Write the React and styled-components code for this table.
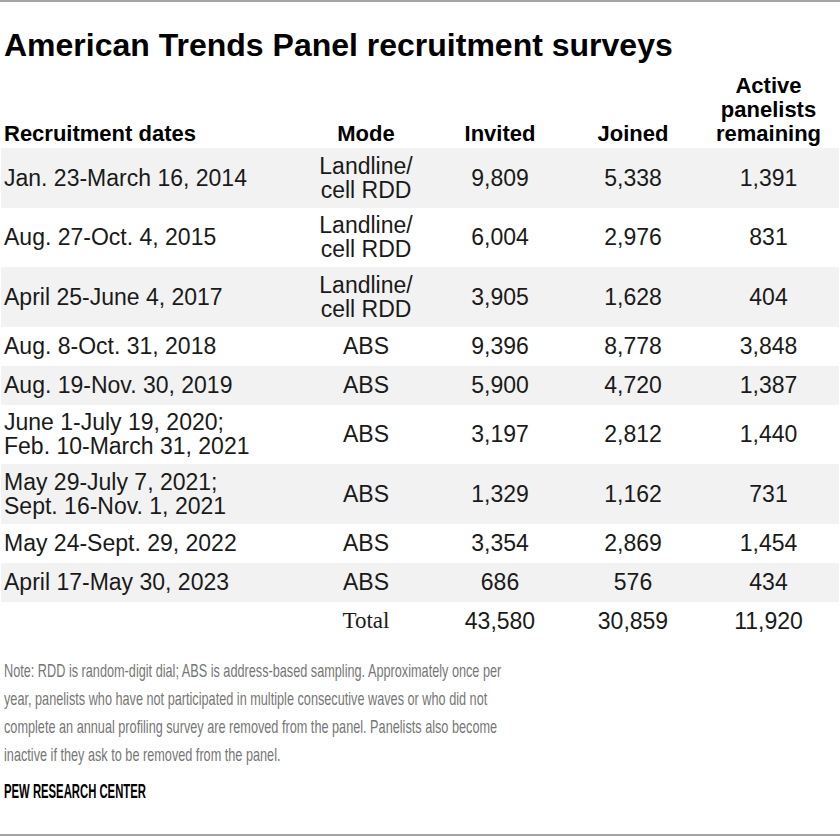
import React from 'react';
import styled, { createGlobalStyle } from 'styled-components';

const rows = [
  { dates: ['Jan. 23-March 16, 2014'], mode: ['Landline/', 'cell RDD'], invited: '9,809', joined: '5,338', active: '1,391', tall: true },
  { dates: ['Aug. 27-Oct. 4, 2015'], mode: ['Landline/', 'cell RDD'], invited: '6,004', joined: '2,976', active: '831', tall: true },
  { dates: ['April 25-June 4, 2017'], mode: ['Landline/', 'cell RDD'], invited: '3,905', joined: '1,628', active: '404', tall: true },
  { dates: ['Aug. 8-Oct. 31, 2018'], mode: ['ABS'], invited: '9,396', joined: '8,778', active: '3,848' },
  { dates: ['Aug. 19-Nov. 30, 2019'], mode: ['ABS'], invited: '5,900', joined: '4,720', active: '1,387' },
  { dates: ['June 1-July 19, 2020;', 'Feb. 10-March 31, 2021'], mode: ['ABS'], invited: '3,197', joined: '2,812', active: '1,440', tall: true },
  { dates: ['May 29-July 7, 2021;', 'Sept. 16-Nov. 1, 2021'], mode: ['ABS'], invited: '1,329', joined: '1,162', active: '731', tall: true },
  { dates: ['May 24-Sept. 29, 2022'], mode: ['ABS'], invited: '3,354', joined: '2,869', active: '1,454' },
  { dates: ['April 17-May 30, 2023'], mode: ['ABS'], invited: '686', joined: '576', active: '434' },
];

const GlobalStyle = createGlobalStyle`
  body {
    margin: 0;
    background: #fff;
    font-family: "Liberation Sans", Arial, sans-serif;
  }
`;

const Frame = styled.div`
  width: 840px;
  height: 836px;
  box-sizing: border-box;
  border-top: 2px solid #a3a3a3;
  border-bottom: 2px solid #a3a3a3;
  padding: 0 1px;
  overflow: hidden;
`;

const Title = styled.h1`
  margin: 25px 0 0 3px;
  font-size: 32px;
  line-height: 36px;
  font-weight: 700;
  color: #000;
`;

const Table = styled.table`
  margin-top: 11px;
  width: 838px;
  border-collapse: collapse;
  table-layout: fixed;
  color: #1a1a1a;
`;

const HeadCell = styled.th`
  padding: 0 0 2px ${p => (p.left ? '3px' : '0')};
  vertical-align: bottom;
  text-align: ${p => (p.left ? 'left' : 'center')};
  font-size: 22px;
  line-height: 24px;
  font-weight: 700;
  color: #000;
`;

const Row = styled.tr`
  background: ${p => (p.striped ? '#f2f2f2' : '#fff')};
  height: ${p => (p.tall ? '59.5px' : '39px')};
`;

const Cell = styled.td`
  padding: 0 0 0 ${p => (p.left ? '3px' : '0')};
  vertical-align: middle;
  text-align: ${p => (p.left ? 'left' : 'center')};
  font-size: 23px;
  line-height: 24px;
  white-space: nowrap;
`;

const TotalLabel = styled.td`
  padding: 0;
  text-align: center;
  font-family: "Liberation Serif", "Times New Roman", serif;
  font-size: 23px;
`;

/* condensed face emulated by a horizontal squeeze */
const Note = styled.p`
  margin: 16px 0 0 3px;
  width: 730px;
  transform: scaleX(0.686);
  transform-origin: left top;
  font-size: 18.5px;
  line-height: 28px;
  color: #767676;
`;

const Source = styled.div`
  margin: 11px 0 0 3px;
  width: 400px;
  transform: scaleX(0.565);
  transform-origin: left top;
  font-size: 20px;
  line-height: 22px;
  font-weight: 700;
  color: #000;
`;

function Lines({ items }) {
  return items.map((t, i) => (
    <React.Fragment key={i}>
      {i > 0 && <br />}
      {t}
    </React.Fragment>
  ));
}

export default function App() {
  return (
    <>
      <GlobalStyle />
      <Frame>
        <Title>American Trends Panel recruitment surveys</Title>
        <Table>
          <colgroup>
            <col style={{ width: 299 }} />
            <col style={{ width: 132 }} />
            <col style={{ width: 136 }} />
            <col style={{ width: 130 }} />
            <col style={{ width: 141 }} />
          </colgroup>
          <thead>
            <tr>
              <HeadCell left>Recruitment dates</HeadCell>
              <HeadCell>Mode</HeadCell>
              <HeadCell>Invited</HeadCell>
              <HeadCell>Joined</HeadCell>
              <HeadCell>Active<br />panelists<br />remaining</HeadCell>
            </tr>
          </thead>
          <tbody>
            {rows.map((r, i) => (
              <Row key={i} striped={i % 2 === 0} tall={r.tall}>
                <Cell left><Lines items={r.dates} /></Cell>
                <Cell><Lines items={r.mode} /></Cell>
                <Cell>{r.invited}</Cell>
                <Cell>{r.joined}</Cell>
                <Cell>{r.active}</Cell>
              </Row>
            ))}
            <Row>
              <Cell left />
              <TotalLabel>Total</TotalLabel>
              <Cell>43,580</Cell>
              <Cell>30,859</Cell>
              <Cell>11,920</Cell>
            </Row>
          </tbody>
        </Table>
        <Note>
          Note: RDD is random-digit dial; ABS is address-based sampling. Approximately once per year, panelists who have not participated in multiple consecutive waves or who did not complete an annual profiling survey are removed from the panel. Panelists also become inactive if they ask to be removed from the panel.
        </Note>
        <Source>PEW RESEARCH CENTER</Source>
      </Frame>
    </>
  );
}
